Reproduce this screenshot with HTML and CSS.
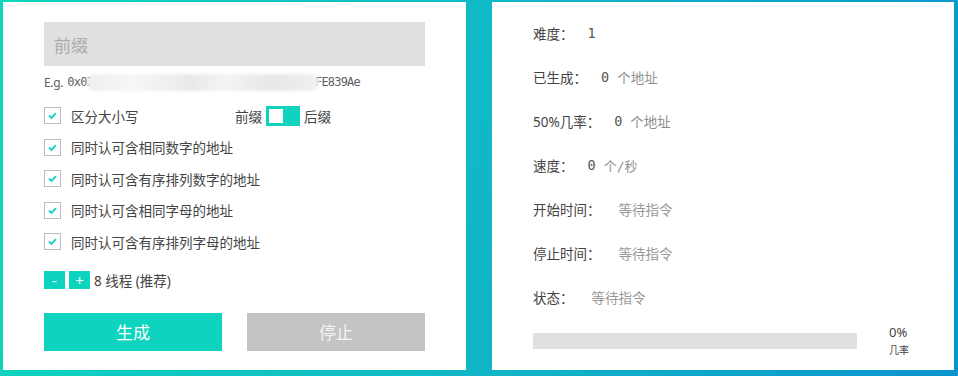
FILE: index.html
```html
<!DOCTYPE html>
<html lang="zh-CN">
<head>
    <meta charset="UTF-8">
    <meta name="viewport" content="width=device-width, initial-scale=1.0">
    <title>靓号生成</title>
    <link rel="stylesheet" href="styles.css">
</head>
<body>
    <div class="page">
        <!-- 左侧：参数设置 -->
        <div class="card card-left">
            <input class="prefix-input" type="text" placeholder="前缀">
            <div class="example"><span class="eg">E.g.</span>0x02<span class="blur"></span>FE839Ae</div>

            <div class="opt-row opt-first">
                <label class="check"><span class="box"><svg viewBox="0 0 16 16"><path d="M4.2 8l2.7 2.5 4.8-5" fill="none" stroke="#1ACBC6" stroke-width="2"/></svg></span>区分大小写</label>
                <div class="switch-group">
                    <span>前缀</span>
                    <span class="switch"><span class="knob"></span></span>
                    <span>后缀</span>
                </div>
            </div>
            <div class="opt-row">
                <label class="check"><span class="box"><svg viewBox="0 0 16 16"><path d="M4.2 8l2.7 2.5 4.8-5" fill="none" stroke="#1ACBC6" stroke-width="2"/></svg></span>同时认可含相同数字的地址</label>
            </div>
            <div class="opt-row">
                <label class="check"><span class="box"><svg viewBox="0 0 16 16"><path d="M4.2 8l2.7 2.5 4.8-5" fill="none" stroke="#1ACBC6" stroke-width="2"/></svg></span>同时认可含有序排列数字的地址</label>
            </div>
            <div class="opt-row">
                <label class="check"><span class="box"><svg viewBox="0 0 16 16"><path d="M4.2 8l2.7 2.5 4.8-5" fill="none" stroke="#1ACBC6" stroke-width="2"/></svg></span>同时认可含相同字母的地址</label>
            </div>
            <div class="opt-row">
                <label class="check"><span class="box"><svg viewBox="0 0 16 16"><path d="M4.2 8l2.7 2.5 4.8-5" fill="none" stroke="#1ACBC6" stroke-width="2"/></svg></span>同时认可含有序排列字母的地址</label>
            </div>

            <div class="threads">
                <button class="mini-btn">-</button>
                <button class="mini-btn">+</button>
                <span class="threads-text">8 线程 (推荐)</span>
            </div>

            <div class="actions">
                <button class="btn btn-go">生成</button>
                <button class="btn btn-stop">停止</button>
            </div>
        </div>

        <!-- 右侧：状态信息 -->
        <div class="card card-right">
            <div class="info-row"><span class="label">难度：</span><span class="num">1</span></div>
            <div class="info-row"><span class="label">已生成：</span><span class="num">0</span><span class="unit">个地址</span></div>
            <div class="info-row"><span class="label">50%几率：</span><span class="num">0</span><span class="unit">个地址</span></div>
            <div class="info-row"><span class="label">速度：</span><span class="num">0</span><span class="unit mono">个/秒</span></div>
            <div class="info-row"><span class="label">开始时间：</span><span class="wait">等待指令</span></div>
            <div class="info-row"><span class="label">停止时间：</span><span class="wait">等待指令</span></div>
            <div class="info-row"><span class="label">状态：</span><span class="wait">等待指令</span></div>

            <div class="progress">
                <div class="bar"></div>
                <div class="percent">
                    <div class="pct">0%</div>
                    <div class="pct-label">几率</div>
                </div>
            </div>
        </div>
    </div>
</body>
</html>
```

FILE: styles.css
```css
body {
    margin: 0;
    padding: 0;
    font-family: 'Noto Sans', 'Noto Sans CJK SC', sans-serif;
    background: linear-gradient(100deg, #0ed6bd 0%, #10b8c6 50%, #0894cf 100%);
    height: 376px;
    overflow: hidden;
}
.page {
    display: flex;
    gap: 26px;
    padding: 2px 4px 0 3px;
}
.card {
    background: #FFFFFF;
    height: 368px;
    box-sizing: border-box;
}
.card-left {
    width: 463px;
    padding: 20px 41px 0 41px;
}
.card-right {
    width: 462px;
    padding: 9px 41px 0 41px;
}

/* 前缀输入 */
.prefix-input {
    display: block;
    width: 100%;
    height: 44px;
    box-sizing: border-box;
    border: none;
    background: #E0E0E0;
    padding: 0 10px;
    font-size: 17px;
    font-family: 'Noto Sans CJK SC', sans-serif;
    outline: none;
}
.prefix-input::placeholder {
    color: #ABABAB;
}
.example {
    margin-top: 8px;
    height: 16px;
    display: flex;
    align-items: center;
    font-family: 'DejaVu Sans Mono', monospace;
    font-size: 12px;
    letter-spacing: -0.8px;
    color: #5E5E5E;
}
.example .eg {
    font-family: 'Noto Sans', sans-serif;
    font-size: 12px;
    letter-spacing: -0.3px;
    margin-right: 4px;
}
.example .blur {
    display: inline-block;
    width: 232px;
    height: 17px;
    margin: 0 -4px 0 -6px;
    background: linear-gradient(to right, #eeeeee, #f7f7f7 20%, #e9e9e9 45%, #f4f4f4 60%, #e7e7e7 80%, #f1f1f1);
    border-radius: 8px;
    filter: blur(1.5px);
}

/* 选项 */
.opt-row {
    height: 31.5px;
    display: flex;
    align-items: center;
}
.opt-first {
    margin-top: 10px;
    display: grid;
    grid-template-columns: 191px auto;
}
.check {
    display: flex;
    align-items: center;
    font-size: 13.5px;
    color: #444444;
}
.check .box {
    width: 15px;
    height: 15px;
    border: 1px solid #BDBDBD;
    margin-right: 10px;
    display: flex;
}
.check .box svg {
    width: 15px;
    height: 15px;
}
.switch-group {
    display: flex;
    align-items: center;
    gap: 4px;
    font-size: 13.5px;
    color: #444444;
}
.switch {
    width: 34px;
    height: 20px;
    background: #0DD3BF;
    display: flex;
    align-items: center;
    padding-left: 3px;
    box-sizing: border-box;
}
.switch .knob {
    width: 14px;
    height: 14px;
    background: #FFFFFF;
}

/* 线程 */
.threads {
    margin-top: 12px;
    display: flex;
    align-items: center;
    gap: 4px;
}
.mini-btn {
    width: 21px;
    height: 18px;
    padding: 0;
    border: none;
    background: #0DD3BF;
    color: #FFFFFF;
    font-size: 15px;
    line-height: 18px;
    font-family: 'Noto Sans', sans-serif;
}
.threads-text {
    font-size: 13.5px;
    color: #444444;
}

/* 按钮 */
.actions {
    margin-top: 23px;
    display: flex;
    justify-content: space-between;
}
.btn {
    width: 178px;
    height: 38px;
    border: none;
    color: #FFFFFF;
    font-size: 17px;
    font-family: 'Noto Sans CJK SC', sans-serif;
}
.btn-go {
    background: #0DD3BF;
}
.btn-stop {
    background: #C4C4C4;
    color: #F4F4F4;
}

/* 右侧信息 */
.info-row {
    height: 44px;
    display: flex;
    align-items: center;
    font-size: 13.5px;
}
.info-row .label {
    color: #444444;
}
.info-row .num {
    margin-left: 14px;
    font-family: 'DejaVu Sans Mono', monospace;
    font-size: 13.5px;
    color: #555555;
}
.info-row .unit {
    margin-left: 8px;
    color: #8F8F8F;
}
.info-row .unit.mono {
    font-family: 'DejaVu Sans Mono', 'Noto Sans CJK SC', monospace;
    font-size: 13px;
}
.info-row .wait {
    margin-left: 18px;
    color: #999999;
}
.progress {
    display: flex;
    align-items: flex-start;
}
.progress .bar {
    width: 324px;
    height: 16px;
    margin-top: 14px;
    background: #E0E0E0;
}
.progress .percent {
    margin-left: 32px;
    margin-top: 5px;
    color: #444444;
}
.pct {
    font-size: 13px;
    line-height: 16px;
}
.pct-label {
    font-size: 10px;
    line-height: 14px;
    margin-top: 3px;
}
```
